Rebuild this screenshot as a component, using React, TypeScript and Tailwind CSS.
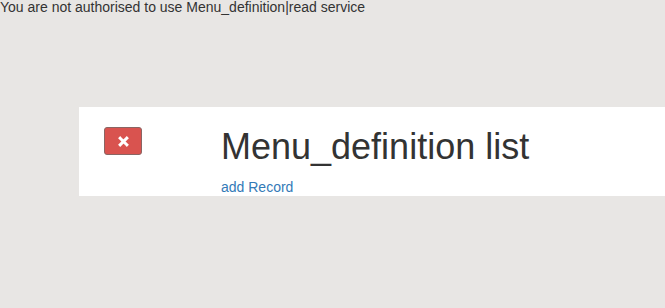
import React from "react";

export default function App() {
  return (
    <div
      className="w-[665px] h-[308px] bg-[#e8e6e4] text-[#333] overflow-hidden"
      style={{ fontFamily: '"Liberation Sans", Arial, sans-serif' }}
    >
      <div className="text-[14px] leading-[14px] h-[87px]">
        You are not authorised to use Menu_definition|read service
      </div>
      <div className="ml-[79px] mt-[20px] bg-white h-[89px] flex">
        <div className="w-[142px] pl-[25px] pt-[20px]">
          <button className="w-[38px] h-[28px] rounded-[3px] bg-[#d9534f] border border-[#8a6563] flex items-center justify-center">
            <svg width="11" height="11" viewBox="0 0 11 11">
              <path d="M2.2 2.2 L8.8 8.8 M8.8 2.2 L2.2 8.8" stroke="#fff" strokeWidth="3" strokeLinecap="square" />
            </svg>
          </button>
        </div>
        <div className="flex flex-col">
          <h1 className="mt-[20px] mb-[10px] text-[36px] leading-[39.6px] font-normal text-[#333]">
            Menu_definition list
          </h1>
          <a className="text-[14px] leading-[20px] text-[#337ab7]" href="#">
            add Record
          </a>
        </div>
      </div>
    </div>
  );
}
